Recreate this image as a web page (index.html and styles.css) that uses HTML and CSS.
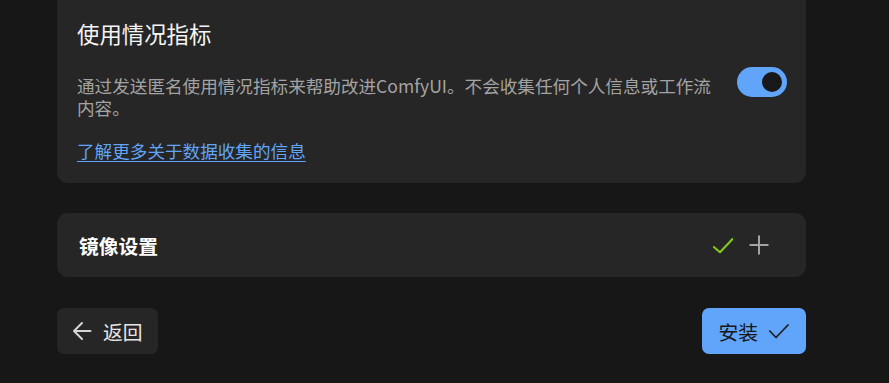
FILE: index.html
```html
<!DOCTYPE html>
<html lang="zh-CN">
<head>
<meta charset="utf-8">
<title>使用情况指标</title>
<link rel="stylesheet" href="styles.css">
</head>
<body>
<div class="wrap">
  <section class="card card-metrics">
    <h2 class="title">使用情况指标</h2>
    <div class="row">
      <p class="desc">通过发送匿名使用情况指标来帮助改进ComfyUI。不会收集任何个人信息或工作流内容。</p>
      <span class="toggle"><span class="knob"></span></span>
    </div>
    <a class="link" href="#">了解更多关于数据收集的信息</a>
  </section>

  <section class="card card-mirror">
    <span class="mirror-title">镜像设置</span>
    <div class="icons">
      <svg class="ico ico-check" viewBox="0 0 20 20" width="20" height="20"><polyline points="0.8,12 7,17.2 19.5,4" fill="none" stroke="#84cc16" stroke-width="2" stroke-linecap="round" stroke-linejoin="round"/></svg>
      <svg class="ico ico-plus" viewBox="0 0 20 20" width="20" height="20"><path d="M10 0.5V19.5M0.5 10H19.5" fill="none" stroke="#a3a3a3" stroke-width="2"/></svg>
    </div>
  </section>

  <div class="actions">
    <button class="btn btn-back">
      <svg viewBox="0 0 20 20" width="20" height="20"><path d="M18.5 10H2M10 2L2 10L10 18" fill="none" stroke="#d4d4d4" stroke-width="2" stroke-linecap="round" stroke-linejoin="round"/></svg>
      <span>返回</span>
    </button>
    <button class="btn btn-install">
      <span>安装</span>
      <svg viewBox="0 0 20 20" width="20" height="20"><polyline points="0.8,10 7,16.5 19,4" fill="none" stroke="#1f1f1f" stroke-width="1.8" stroke-linecap="round" stroke-linejoin="round"/></svg>
    </button>
  </div>
</div>
</body>
</html>
```

FILE: styles.css
```css
html, body {
  margin: 0;
  padding: 0;
  background: #171717;
  font-family: "Noto Sans CJK SC", "Noto Sans", sans-serif;
  overflow: hidden;
}

.wrap {
  width: 749px;
  margin-left: 57px;
  margin-top: -20px;
}

.card {
  background: #262626;
  border-radius: 11px;
}

.card-metrics {
  padding: 37px 19px 20px 20px;
}

.title {
  margin: 0 0 25px;
  font-size: 22.4px;
  line-height: 33px;
  font-weight: 400;
  color: #f5f5f5;
}

.row {
  display: flex;
  align-items: flex-start;
  gap: 21px;
}

.desc {
  flex: 1;
  margin: 0;
  font-size: 17.6px;
  line-height: 22px;
  color: #a3a3a3;
}

.toggle {
  flex: none;
  width: 50px;
  height: 30px;
  margin-top: -8px;
  border-radius: 15px;
  background: #60a5fa;
  display: flex;
  align-items: center;
  justify-content: flex-end;
  padding-right: 5px;
  box-sizing: border-box;
}

.knob {
  width: 20px;
  height: 20px;
  border-radius: 50%;
  background: #18181b;
}

.link {
  display: inline-block;
  margin-top: 21px;
  font-size: 17.6px;
  line-height: 22px;
  color: #60a5fa;
  text-decoration: underline;
  text-underline-offset: 3px;
}

.card-mirror {
  margin-top: 30px;
  height: 64px;
  padding: 0 37px 0 22px;
  display: flex;
  align-items: center;
  justify-content: space-between;
}

.mirror-title {
  font-size: 19.8px;
  font-weight: 700;
  color: #ffffff;
}

.icons {
  display: flex;
  align-items: center;
  gap: 16px;
}

.ico {
  display: block;
}

.actions {
  margin-top: 31px;
  display: flex;
  justify-content: space-between;
}

.btn {
  height: 46px;
  border: none;
  border-radius: 7px;
  display: flex;
  align-items: center;
  gap: 11px;
  font-family: inherit;
  font-size: 19.8px;
  white-space: nowrap;
  padding: 0 15px;
  cursor: pointer;
}

.btn svg {
  display: block;
  flex: none;
}

.btn-back {
  background: #262626;
  color: #e5e5e5;
}

.btn-install {
  background: #60a5fa;
  color: #171717;
  padding: 0 17px 0 16px;
}
```
